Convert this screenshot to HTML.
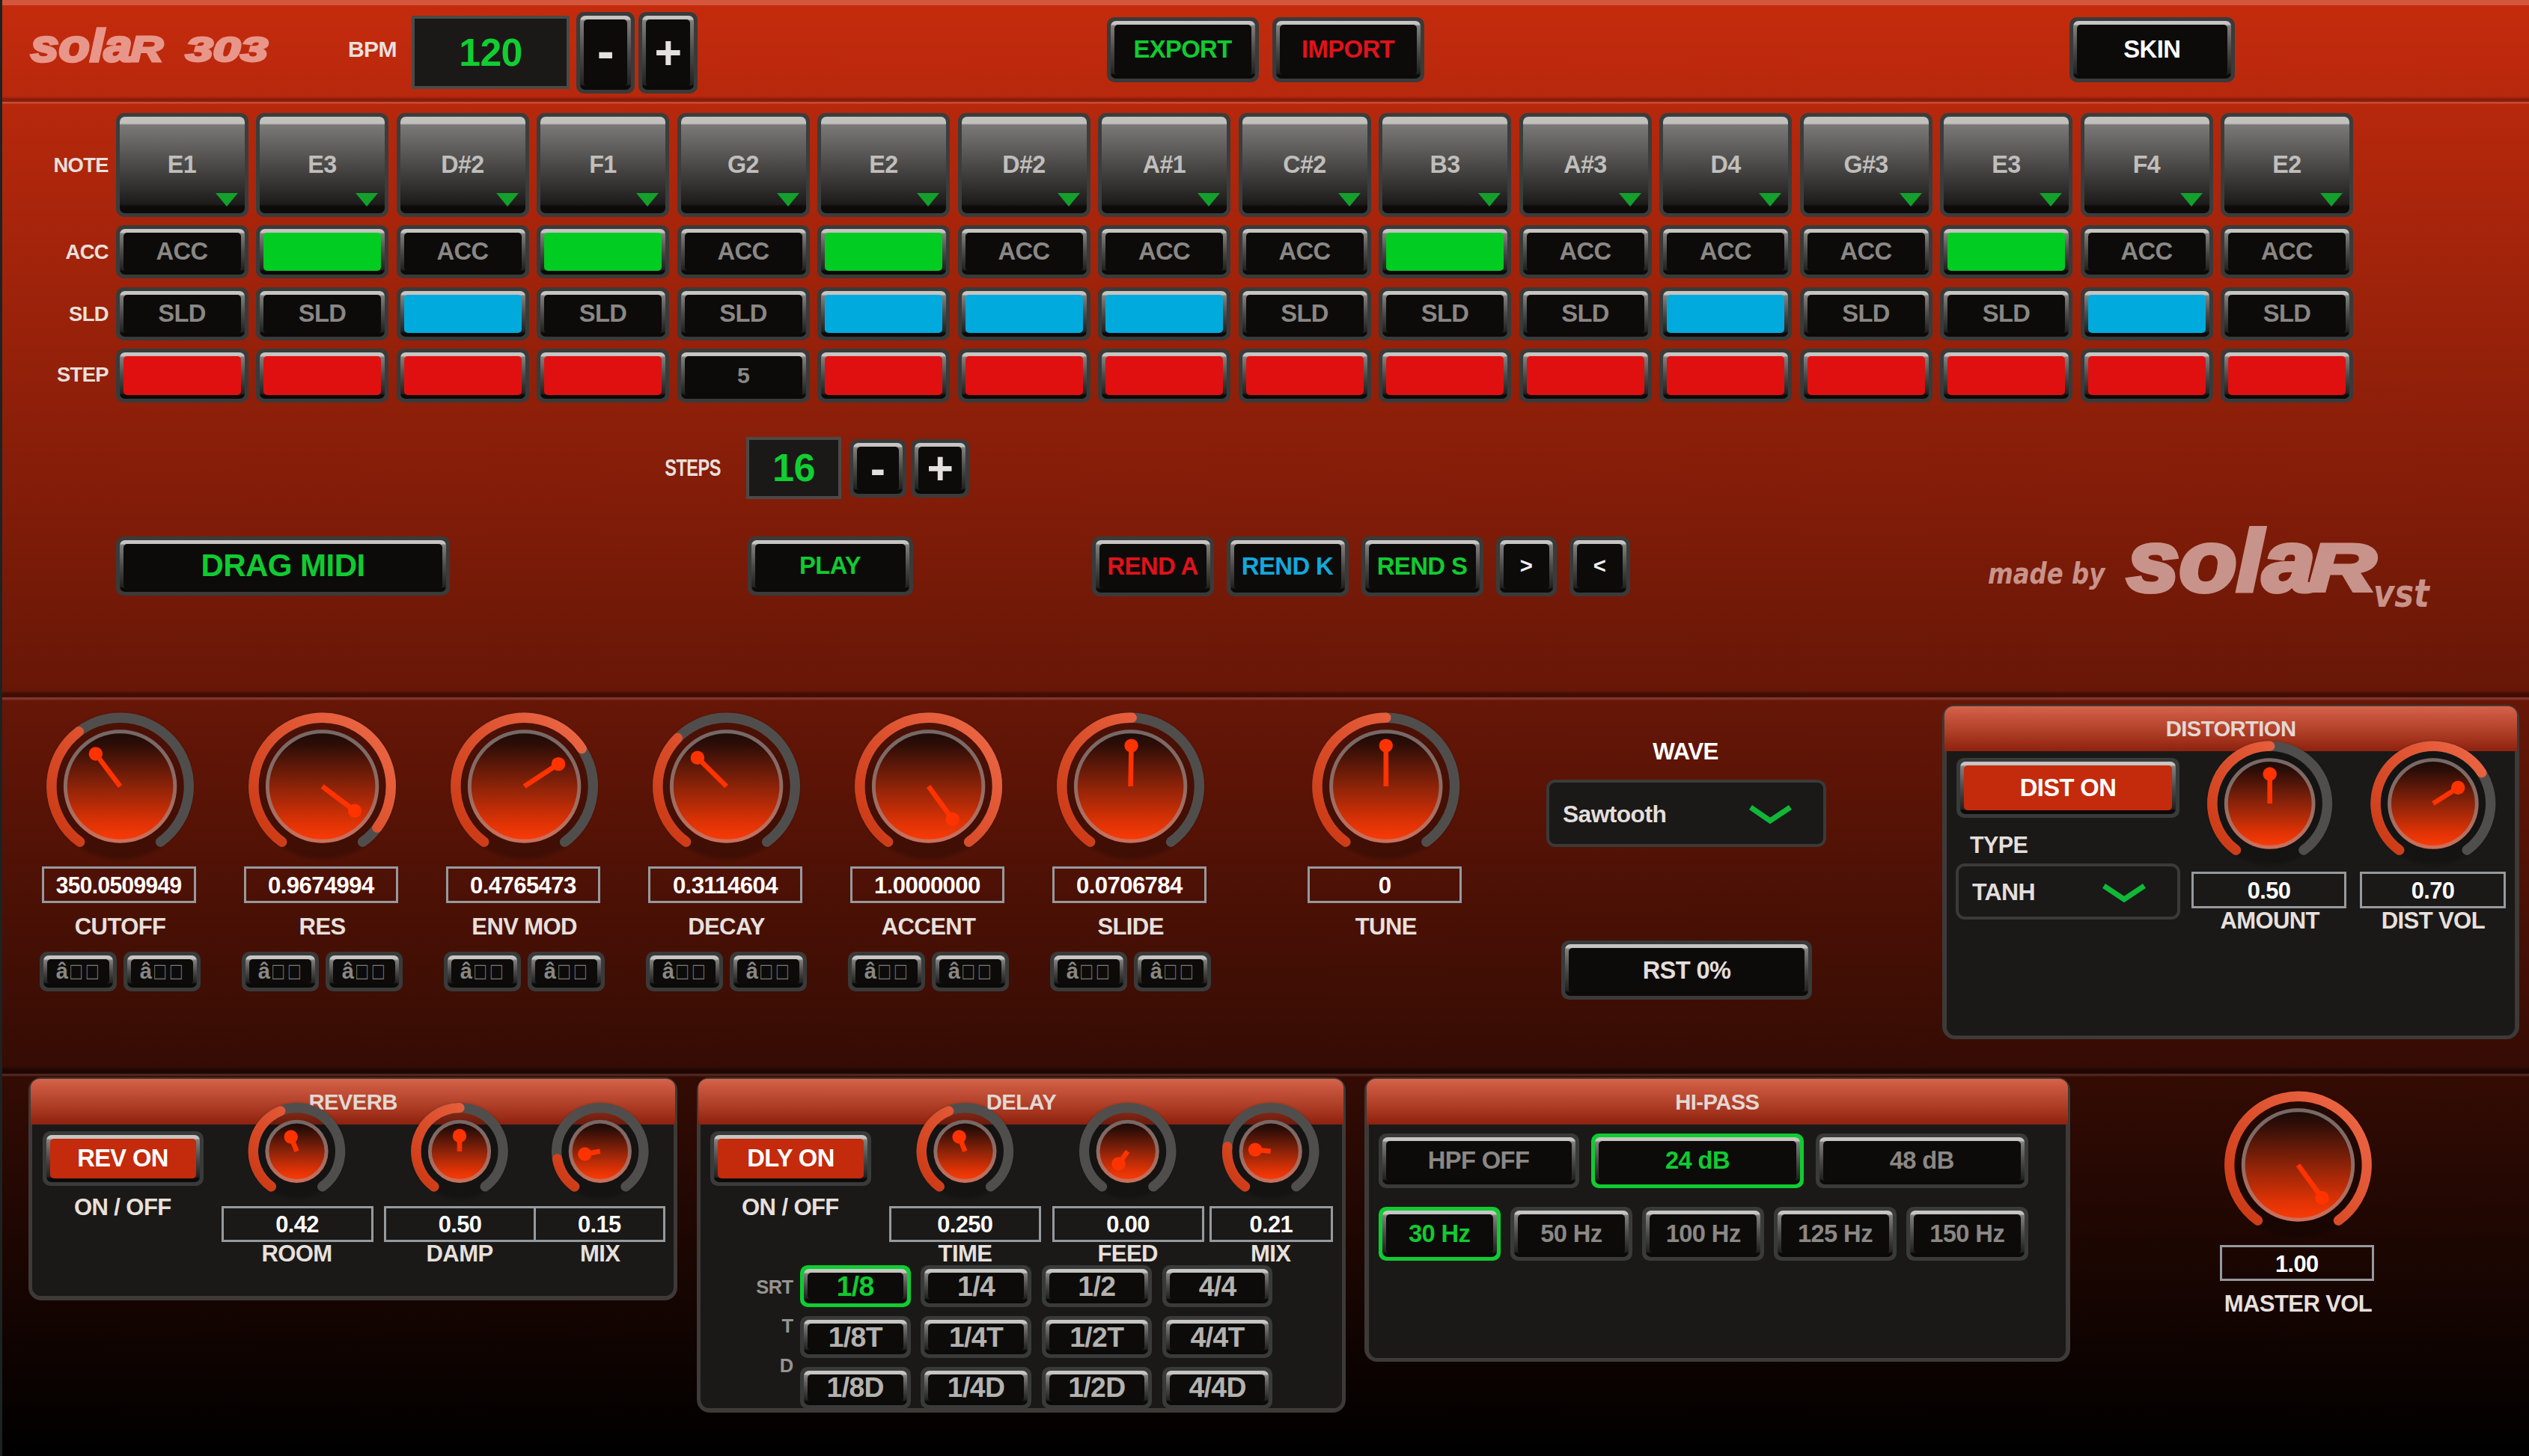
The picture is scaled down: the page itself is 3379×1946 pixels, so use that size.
<!DOCTYPE html><html><head><meta charset="utf-8"><title>solar 303</title><style>
*{margin:0;padding:0;box-sizing:border-box}
html,body{width:3379px;height:1946px;overflow:hidden;background:#000}
body{font-family:"Liberation Sans",sans-serif;font-weight:bold;position:relative;letter-spacing:-0.038em}
#bg{position:absolute;left:0;top:0;width:3379px;height:1946px;background:linear-gradient(to bottom,#c52b0d 0px,#000 1946px)}
#edge{position:absolute;left:0;top:0;width:3px;height:1946px;background:#1d2322}
#top{position:absolute;left:3px;top:0;width:3376px;height:7px;background:#d4563c}
.sepd{position:absolute;left:3px;width:3376px;height:6px}
.sepl{position:absolute;left:3px;width:3376px;height:3px}
.a{position:absolute}
.t{position:absolute;white-space:nowrap;text-align:center}
.b{position:absolute;background:#393b3a;border-radius:10px;padding:5px}
.b.sel{background:#10cc30}
.bv{width:100%;height:100%;border-radius:7px;padding:5px;background:linear-gradient(to bottom,#c9c8c5 0,#c4c3c0 4.6px,#807f7d 6.6px,#4b4a49 50%,#222221 calc(100% - 7px),#0b0a09 calc(100% - 5px),#0b0a09 100%)}
.f{width:100%;height:100%;border-radius:5px;display:flex;align-items:center;justify-content:center;background:#0c0b0a;color:#8a8784;font-size:32.7px;white-space:nowrap;padding-top:0px}
.n{position:absolute;background:#3b3d3c;border-radius:11px;padding:5px}
.ni{width:100%;height:100%;border-radius:7px;position:relative;background:linear-gradient(to bottom,#c2c1be 0,#c2c1be 9px,#7a7977 11px,#1c1b1a calc(100% - 12px),#0c0b0a calc(100% - 9px),#0c0b0a 100%);display:flex;align-items:center;justify-content:center;color:#c0bebb;font-size:32.3px}
.ni i{position:absolute;right:9px;bottom:9px;width:0;height:0;border-left:15px solid transparent;border-right:15px solid transparent;border-top:18px solid #13a02b}
.vb{position:absolute;border:3.5px solid #959a9e;color:#fff;font-size:29px;display:flex;align-items:center;justify-content:center;padding-top:2.5px}
.lcd{position:absolute;border:4px solid #4a4a48;background:#1a1918;color:#10cf30;display:flex;align-items:center;justify-content:center}
.p{position:absolute;background:#3d3a37;border-radius:17px;padding:5.6px}
.pi{width:100%;height:100%;border-radius:11.5px;background:#1a1918}
.ph{position:absolute;left:2.9px;top:2.6px;right:2.9px;border-radius:12px 12px 0 0;background:linear-gradient(to bottom,#d5644b 0,#c9553d 18%,#b4432b 50%,#a0301a 78%,#8c2210 100%)}
.dd{position:absolute;border:4px solid #3a3a39;border-radius:12px;background:#1a1918;color:#e4dedb;font-size:30px}
.tf{font-weight:normal;display:inline-block;transform:scale(0.86,1.1);transform-origin:left 62%;letter-spacing:7.5px;margin-left:3px;margin-right:-9px;color:#7c7a78}
svg{position:absolute;left:0;top:0;overflow:visible}
</style></head><body>
<div id="bg"></div><div id="edge"></div><div id="top"></div>
<div class="sepd" style="top:129.2px;height:6.9px;background:linear-gradient(to bottom,#891c0a00 0,#891c0a 3px,#891c0a 100%)"></div>
<div class="sepl" style="top:136.1px;height:3px;background:linear-gradient(to bottom,#c54a30 0,#c54a30 55%,#bd391e 100%)"></div>
<div class="sepd" style="top:923.2px;height:9px;background:linear-gradient(to bottom,#410e0400 0,#410e04 4px,#410e04 100%)"></div>
<div class="sepl" style="top:932.2px;height:4.3px;background:linear-gradient(to bottom,#81352a 0,#81352a 55%,#6e2012 100%)"></div>
<div class="sepd" style="top:1424.5px;height:10.3px;background:linear-gradient(to bottom,#1f060200 0,#1f0602 5.5px,#1f0602 100%)"></div>
<div class="sepl" style="top:1434.8px;height:4.3px;background:linear-gradient(to bottom,#4f251d 0,#4f251d 55%,#3c120b 100%)"></div>
<div class="t" style="left:97.5px;width:800px;text-align:center;top:49.12px;line-height:34.61px;font-size:30.1px;color:#e8e0dc">BPM</div>
<div class="lcd" style="left:550px;top:20.5px;width:211px;height:98.5px;font-size:51.73px">120</div>
<div class="b" style="left:770px;top:15.5px;width:78px;height:109.5px"><div class="bv"><div class="f" style="padding-bottom:3px;color:#e4e0dd;font-size:68.97px;">-</div></div></div>
<div class="b" style="left:853px;top:15.5px;width:79px;height:109.5px"><div class="bv"><div class="f" style="color:#e4e0dd;font-size:62.7px;">+</div></div></div>
<div class="b" style="left:1478.5px;top:22.5px;width:203px;height:87px"><div class="bv"><div class="f" style="color:#10cb30;font-size:32.81px;">EXPORT</div></div></div>
<div class="b" style="left:1699.5px;top:22.5px;width:203px;height:87px"><div class="bv"><div class="f" style="color:#e0121a;font-size:32.81px;">IMPORT</div></div></div>
<div class="b" style="left:2764.5px;top:22.5px;width:221.5px;height:87px"><div class="bv"><div class="f" style="color:#ffffff;font-size:32.81px;">SKIN</div></div></div>
<div class="t" style="left:-655px;width:800px;text-align:right;top:205.19px;line-height:31.49px;font-size:27.38px;color:#e8e0dc">NOTE</div>
<div class="t" style="left:-655px;width:800px;text-align:right;top:321.19px;line-height:31.49px;font-size:27.38px;color:#e8e0dc">ACC</div>
<div class="t" style="left:-655px;width:800px;text-align:right;top:403.69px;line-height:31.49px;font-size:27.38px;color:#e8e0dc">SLD</div>
<div class="t" style="left:-655px;width:800px;text-align:right;top:485.49px;line-height:31.49px;font-size:27.38px;color:#e8e0dc">STEP</div>
<div class="n" style="left:154.5px;top:150.5px;width:177px;height:139.5px"><div class="ni">E1<i></i></div></div>
<div class="b" style="left:154.5px;top:300.5px;width:177px;height:71.5px"><div class="bv"><div class="f" style="">ACC</div></div></div>
<div class="b" style="left:154.5px;top:383.5px;width:177px;height:71px"><div class="bv"><div class="f" style="">SLD</div></div></div>
<div class="b" style="left:154.5px;top:466px;width:177px;height:71.5px"><div class="bv"><div class="f" style="background:#e01010;"></div></div></div>
<div class="n" style="left:342px;top:150.5px;width:177px;height:139.5px"><div class="ni">E3<i></i></div></div>
<div class="b" style="left:342px;top:300.5px;width:177px;height:71.5px"><div class="bv"><div class="f" style="background:#00cc22;"></div></div></div>
<div class="b" style="left:342px;top:383.5px;width:177px;height:71px"><div class="bv"><div class="f" style="">SLD</div></div></div>
<div class="b" style="left:342px;top:466px;width:177px;height:71.5px"><div class="bv"><div class="f" style="background:#e01010;"></div></div></div>
<div class="n" style="left:529.5px;top:150.5px;width:177px;height:139.5px"><div class="ni">D#2<i></i></div></div>
<div class="b" style="left:529.5px;top:300.5px;width:177px;height:71.5px"><div class="bv"><div class="f" style="">ACC</div></div></div>
<div class="b" style="left:529.5px;top:383.5px;width:177px;height:71px"><div class="bv"><div class="f" style="background:#00aadc;"></div></div></div>
<div class="b" style="left:529.5px;top:466px;width:177px;height:71.5px"><div class="bv"><div class="f" style="background:#e01010;"></div></div></div>
<div class="n" style="left:717px;top:150.5px;width:177px;height:139.5px"><div class="ni">F1<i></i></div></div>
<div class="b" style="left:717px;top:300.5px;width:177px;height:71.5px"><div class="bv"><div class="f" style="background:#00cc22;"></div></div></div>
<div class="b" style="left:717px;top:383.5px;width:177px;height:71px"><div class="bv"><div class="f" style="">SLD</div></div></div>
<div class="b" style="left:717px;top:466px;width:177px;height:71.5px"><div class="bv"><div class="f" style="background:#e01010;"></div></div></div>
<div class="n" style="left:904.5px;top:150.5px;width:177px;height:139.5px"><div class="ni">G2<i></i></div></div>
<div class="b" style="left:904.5px;top:300.5px;width:177px;height:71.5px"><div class="bv"><div class="f" style="">ACC</div></div></div>
<div class="b" style="left:904.5px;top:383.5px;width:177px;height:71px"><div class="bv"><div class="f" style="">SLD</div></div></div>
<div class="b" style="left:904.5px;top:466px;width:177px;height:71.5px"><div class="bv"><div class="f" style="font-size:30.3px;">5</div></div></div>
<div class="n" style="left:1092px;top:150.5px;width:177px;height:139.5px"><div class="ni">E2<i></i></div></div>
<div class="b" style="left:1092px;top:300.5px;width:177px;height:71.5px"><div class="bv"><div class="f" style="background:#00cc22;"></div></div></div>
<div class="b" style="left:1092px;top:383.5px;width:177px;height:71px"><div class="bv"><div class="f" style="background:#00aadc;"></div></div></div>
<div class="b" style="left:1092px;top:466px;width:177px;height:71.5px"><div class="bv"><div class="f" style="background:#e01010;"></div></div></div>
<div class="n" style="left:1279.5px;top:150.5px;width:177px;height:139.5px"><div class="ni">D#2<i></i></div></div>
<div class="b" style="left:1279.5px;top:300.5px;width:177px;height:71.5px"><div class="bv"><div class="f" style="">ACC</div></div></div>
<div class="b" style="left:1279.5px;top:383.5px;width:177px;height:71px"><div class="bv"><div class="f" style="background:#00aadc;"></div></div></div>
<div class="b" style="left:1279.5px;top:466px;width:177px;height:71.5px"><div class="bv"><div class="f" style="background:#e01010;"></div></div></div>
<div class="n" style="left:1467px;top:150.5px;width:177px;height:139.5px"><div class="ni">A#1<i></i></div></div>
<div class="b" style="left:1467px;top:300.5px;width:177px;height:71.5px"><div class="bv"><div class="f" style="">ACC</div></div></div>
<div class="b" style="left:1467px;top:383.5px;width:177px;height:71px"><div class="bv"><div class="f" style="background:#00aadc;"></div></div></div>
<div class="b" style="left:1467px;top:466px;width:177px;height:71.5px"><div class="bv"><div class="f" style="background:#e01010;"></div></div></div>
<div class="n" style="left:1654.5px;top:150.5px;width:177px;height:139.5px"><div class="ni">C#2<i></i></div></div>
<div class="b" style="left:1654.5px;top:300.5px;width:177px;height:71.5px"><div class="bv"><div class="f" style="">ACC</div></div></div>
<div class="b" style="left:1654.5px;top:383.5px;width:177px;height:71px"><div class="bv"><div class="f" style="">SLD</div></div></div>
<div class="b" style="left:1654.5px;top:466px;width:177px;height:71.5px"><div class="bv"><div class="f" style="background:#e01010;"></div></div></div>
<div class="n" style="left:1842px;top:150.5px;width:177px;height:139.5px"><div class="ni">B3<i></i></div></div>
<div class="b" style="left:1842px;top:300.5px;width:177px;height:71.5px"><div class="bv"><div class="f" style="background:#00cc22;"></div></div></div>
<div class="b" style="left:1842px;top:383.5px;width:177px;height:71px"><div class="bv"><div class="f" style="">SLD</div></div></div>
<div class="b" style="left:1842px;top:466px;width:177px;height:71.5px"><div class="bv"><div class="f" style="background:#e01010;"></div></div></div>
<div class="n" style="left:2029.5px;top:150.5px;width:177px;height:139.5px"><div class="ni">A#3<i></i></div></div>
<div class="b" style="left:2029.5px;top:300.5px;width:177px;height:71.5px"><div class="bv"><div class="f" style="">ACC</div></div></div>
<div class="b" style="left:2029.5px;top:383.5px;width:177px;height:71px"><div class="bv"><div class="f" style="">SLD</div></div></div>
<div class="b" style="left:2029.5px;top:466px;width:177px;height:71.5px"><div class="bv"><div class="f" style="background:#e01010;"></div></div></div>
<div class="n" style="left:2217px;top:150.5px;width:177px;height:139.5px"><div class="ni">D4<i></i></div></div>
<div class="b" style="left:2217px;top:300.5px;width:177px;height:71.5px"><div class="bv"><div class="f" style="">ACC</div></div></div>
<div class="b" style="left:2217px;top:383.5px;width:177px;height:71px"><div class="bv"><div class="f" style="background:#00aadc;"></div></div></div>
<div class="b" style="left:2217px;top:466px;width:177px;height:71.5px"><div class="bv"><div class="f" style="background:#e01010;"></div></div></div>
<div class="n" style="left:2404.5px;top:150.5px;width:177px;height:139.5px"><div class="ni">G#3<i></i></div></div>
<div class="b" style="left:2404.5px;top:300.5px;width:177px;height:71.5px"><div class="bv"><div class="f" style="">ACC</div></div></div>
<div class="b" style="left:2404.5px;top:383.5px;width:177px;height:71px"><div class="bv"><div class="f" style="">SLD</div></div></div>
<div class="b" style="left:2404.5px;top:466px;width:177px;height:71.5px"><div class="bv"><div class="f" style="background:#e01010;"></div></div></div>
<div class="n" style="left:2592px;top:150.5px;width:177px;height:139.5px"><div class="ni">E3<i></i></div></div>
<div class="b" style="left:2592px;top:300.5px;width:177px;height:71.5px"><div class="bv"><div class="f" style="background:#00cc22;"></div></div></div>
<div class="b" style="left:2592px;top:383.5px;width:177px;height:71px"><div class="bv"><div class="f" style="">SLD</div></div></div>
<div class="b" style="left:2592px;top:466px;width:177px;height:71.5px"><div class="bv"><div class="f" style="background:#e01010;"></div></div></div>
<div class="n" style="left:2779.5px;top:150.5px;width:177px;height:139.5px"><div class="ni">F4<i></i></div></div>
<div class="b" style="left:2779.5px;top:300.5px;width:177px;height:71.5px"><div class="bv"><div class="f" style="">ACC</div></div></div>
<div class="b" style="left:2779.5px;top:383.5px;width:177px;height:71px"><div class="bv"><div class="f" style="background:#00aadc;"></div></div></div>
<div class="b" style="left:2779.5px;top:466px;width:177px;height:71.5px"><div class="bv"><div class="f" style="background:#e01010;"></div></div></div>
<div class="n" style="left:2967px;top:150.5px;width:177px;height:139.5px"><div class="ni">E2<i></i></div></div>
<div class="b" style="left:2967px;top:300.5px;width:177px;height:71.5px"><div class="bv"><div class="f" style="">ACC</div></div></div>
<div class="b" style="left:2967px;top:383.5px;width:177px;height:71px"><div class="bv"><div class="f" style="">SLD</div></div></div>
<div class="b" style="left:2967px;top:466px;width:177px;height:71.5px"><div class="bv"><div class="f" style="background:#e01010;"></div></div></div>
<div class="t" style="left:162.5px;width:800px;text-align:right;top:607.9px;line-height:36.05px;font-size:31.35px;color:#e8e0dc;transform:scaleX(0.75);transform-origin:right center">STEPS</div>
<div class="lcd" style="left:997px;top:584px;width:127px;height:82.5px;font-size:52.25px">16</div>
<div class="b" style="left:1134.5px;top:587px;width:76px;height:77.5px"><div class="bv"><div class="f" style="color:#e4e0dd;font-size:60.61px;">-</div></div></div>
<div class="b" style="left:1217px;top:587px;width:78px;height:77.5px"><div class="bv"><div class="f" style="color:#e4e0dd;font-size:60.61px;">+</div></div></div>
<div class="b" style="left:155px;top:717px;width:446px;height:78.5px"><div class="bv"><div class="f" style="color:#10cb30;font-size:42.11px;">DRAG MIDI</div></div></div>
<div class="b" style="left:998.5px;top:717px;width:221px;height:78.5px"><div class="bv"><div class="f" style="color:#10cb30;font-size:32.71px;">PLAY</div></div></div>
<div class="b" style="left:1458.5px;top:716.5px;width:163px;height:80px"><div class="bv"><div class="f" style="color:#e0121a;font-size:32.92px;">REND A</div></div></div>
<div class="b" style="left:1638.5px;top:716.5px;width:163px;height:80px"><div class="bv"><div class="f" style="color:#12a8dc;font-size:32.92px;">REND K</div></div></div>
<div class="b" style="left:1818.5px;top:716.5px;width:163px;height:80px"><div class="bv"><div class="f" style="color:#10cb30;font-size:32.92px;">REND S</div></div></div>
<div class="b" style="left:1998.5px;top:716.5px;width:81px;height:80px"><div class="bv"><div class="f" style="color:#f0f0f0;font-size:29.26px;">&gt;</div></div></div>
<div class="b" style="left:2096.5px;top:716.5px;width:81px;height:80px"><div class="bv"><div class="f" style="color:#f0f0f0;font-size:29.26px;">&lt;</div></div></div>
<div class="t" style="left:2656px;top:742.63px;font-size:39.5px;line-height:47.4px;color:#c8938a;font-style:italic;font-weight:bold;font-family:'DejaVu Sans',sans-serif;text-align:left;letter-spacing:0;transform:scaleX(0.82);transform-origin:left center">made by</div>
<div class="t" style="left:2842px;top:680.85px;font-size:115px;line-height:138px;color:#c8938a;font-style:italic;font-weight:bold;font-family:'Liberation Sans',sans-serif;text-align:left;letter-spacing:0;transform:scaleX(1.09);transform-origin:left center;-webkit-text-stroke:6px #c8938a;letter-spacing:0px">sola<span style="position:absolute;left:222.02px;top:24.64px;font-size:89.5px;line-height:107.40px;transform:scaleX(1.2844);transform-origin:left center;-webkit-text-stroke:5px #c8938a">R</span></div>
<div class="t" style="left:3171px;top:763.35px;font-size:51px;line-height:61.2px;color:#c8938a;font-style:italic;font-weight:bold;font-family:'DejaVu Sans',sans-serif;text-align:left;letter-spacing:0;transform:scaleX(0.85);transform-origin:left center">vst</div>
<div class="t" style="left:41px;top:24.29px;font-size:61.5px;line-height:73.8px;color:#e8968a;font-style:italic;font-weight:bold;font-family:'Liberation Sans',sans-serif;text-align:left;letter-spacing:0;transform:scaleX(1.1);transform-origin:left center;-webkit-text-stroke:3.5px #e8968a;letter-spacing:0px">sola<span style="position:absolute;left:121.36px;top:12.98px;font-size:48px;line-height:57.60px;transform:scaleX(1.1545);transform-origin:left center;-webkit-text-stroke:3px #e8968a">R</span></div>
<div class="t" style="left:247.5px;top:39.16px;font-size:46px;line-height:55.2px;color:#e8968a;font-style:italic;font-weight:bold;font-family:'Liberation Sans',sans-serif;text-align:left;letter-spacing:0;transform:scaleX(1.43);transform-origin:left center;-webkit-text-stroke:3px #e8968a">303</div>
<div class="vb" style="left:55.6px;top:1157.7px;width:206.6px;height:49.2px;font-size:31.14px"><span style="display:inline-block;transform:scaleX(0.958)">350.0509949</span></div>
<div class="t" style="left:-239.4px;width:800px;text-align:center;top:1220.88px;line-height:35.69px;font-size:31.04px;color:#e8e0dc">CUTOFF</div>
<div class="b" style="left:53.1px;top:1272px;width:102.5px;height:53px"><div class="bv"><div class="f" style="padding-left:1px;color:#8a8784;font-size:29.26px;">â<span class="tf">□□</span></div></div></div>
<div class="b" style="left:165.1px;top:1272px;width:102.5px;height:53px"><div class="bv"><div class="f" style="padding-left:1px;color:#8a8784;font-size:29.26px;">â<span class="tf">□□</span></div></div></div>
<div class="vb" style="left:325.6px;top:1157.7px;width:206.6px;height:49.2px;font-size:31.14px">0.9674994</div>
<div class="t" style="left:30.6px;width:800px;text-align:center;top:1220.88px;line-height:35.69px;font-size:31.04px;color:#e8e0dc">RES</div>
<div class="b" style="left:323.1px;top:1272px;width:102.5px;height:53px"><div class="bv"><div class="f" style="padding-left:1px;color:#8a8784;font-size:29.26px;">â<span class="tf">□□</span></div></div></div>
<div class="b" style="left:435.1px;top:1272px;width:102.5px;height:53px"><div class="bv"><div class="f" style="padding-left:1px;color:#8a8784;font-size:29.26px;">â<span class="tf">□□</span></div></div></div>
<div class="vb" style="left:595.6px;top:1157.7px;width:206.6px;height:49.2px;font-size:31.14px">0.4765473</div>
<div class="t" style="left:300.6px;width:800px;text-align:center;top:1220.88px;line-height:35.69px;font-size:31.04px;color:#e8e0dc">ENV MOD</div>
<div class="b" style="left:593.1px;top:1272px;width:102.5px;height:53px"><div class="bv"><div class="f" style="padding-left:1px;color:#8a8784;font-size:29.26px;">â<span class="tf">□□</span></div></div></div>
<div class="b" style="left:705.1px;top:1272px;width:102.5px;height:53px"><div class="bv"><div class="f" style="padding-left:1px;color:#8a8784;font-size:29.26px;">â<span class="tf">□□</span></div></div></div>
<div class="vb" style="left:865.6px;top:1157.7px;width:206.6px;height:49.2px;font-size:31.14px">0.3114604</div>
<div class="t" style="left:570.6px;width:800px;text-align:center;top:1220.88px;line-height:35.69px;font-size:31.04px;color:#e8e0dc">DECAY</div>
<div class="b" style="left:863.1px;top:1272px;width:102.5px;height:53px"><div class="bv"><div class="f" style="padding-left:1px;color:#8a8784;font-size:29.26px;">â<span class="tf">□□</span></div></div></div>
<div class="b" style="left:975.1px;top:1272px;width:102.5px;height:53px"><div class="bv"><div class="f" style="padding-left:1px;color:#8a8784;font-size:29.26px;">â<span class="tf">□□</span></div></div></div>
<div class="vb" style="left:1135.6px;top:1157.7px;width:206.6px;height:49.2px;font-size:31.14px">1.0000000</div>
<div class="t" style="left:840.6px;width:800px;text-align:center;top:1220.88px;line-height:35.69px;font-size:31.04px;color:#e8e0dc">ACCENT</div>
<div class="b" style="left:1133.1px;top:1272px;width:102.5px;height:53px"><div class="bv"><div class="f" style="padding-left:1px;color:#8a8784;font-size:29.26px;">â<span class="tf">□□</span></div></div></div>
<div class="b" style="left:1245.1px;top:1272px;width:102.5px;height:53px"><div class="bv"><div class="f" style="padding-left:1px;color:#8a8784;font-size:29.26px;">â<span class="tf">□□</span></div></div></div>
<div class="vb" style="left:1405.6px;top:1157.7px;width:206.6px;height:49.2px;font-size:31.14px">0.0706784</div>
<div class="t" style="left:1110.6px;width:800px;text-align:center;top:1220.88px;line-height:35.69px;font-size:31.04px;color:#e8e0dc">SLIDE</div>
<div class="b" style="left:1403.1px;top:1272px;width:102.5px;height:53px"><div class="bv"><div class="f" style="padding-left:1px;color:#8a8784;font-size:29.26px;">â<span class="tf">□□</span></div></div></div>
<div class="b" style="left:1515.1px;top:1272px;width:102.5px;height:53px"><div class="bv"><div class="f" style="padding-left:1px;color:#8a8784;font-size:29.26px;">â<span class="tf">□□</span></div></div></div>
<div class="vb" style="left:1746.8px;top:1157.7px;width:206.6px;height:49.2px;font-size:31.14px">0</div>
<div class="t" style="left:1451.8px;width:800px;text-align:center;top:1220.88px;line-height:35.69px;font-size:31.04px;color:#e8e0dc">TUNE</div>
<div class="t" style="left:1852px;width:800px;text-align:center;top:987.4px;line-height:36.05px;font-size:31.35px;color:#ffffff">WAVE</div>
<div class="dd" style="left:2066px;top:1042px;width:374px;height:90px"><div class="t" style="left:18px;top:24px;line-height:36px;font-size:31.8px;color:#e4dedb">Sawtooth</div></div>
<div class="b" style="left:2086px;top:1257px;width:335px;height:79px"><div class="bv"><div class="f" style="color:#e4dedb;font-size:32.6px;">RST 0%</div></div></div>
<div class="p" style="left:2595.3px;top:941.7px;width:770.7px;height:447.5px"><div class="pi"></div><div class="ph" style="height:59.5px"></div></div>
<div class="t" style="left:2580.65px;width:800px;text-align:center;top:958.15px;line-height:33.65px;font-size:29.26px;color:#e2d8d4">DISTORTION</div>
<div class="b" style="left:2614px;top:1013px;width:298px;height:80px"><div class="bv"><div class="f" style="background:#c42a0c;color:#ffffff;font-size:32.71px;">DIST ON</div></div></div>
<div class="t" style="left:2632px;text-align:left;top:1111.88px;line-height:35.09px;font-size:30.51px;color:#e4dedb">TYPE</div>
<div class="dd" style="left:2613px;top:1154px;width:300px;height:75px"><div class="t" style="left:18px;top:16px;line-height:36px;font-size:32px;color:#e4dedb">TANH</div></div>
<div class="vb" style="left:2928px;top:1165px;width:207px;height:49px;font-size:30.83px">0.50</div>
<div class="vb" style="left:3153px;top:1165px;width:195px;height:49px;font-size:30.83px">0.70</div>
<div class="t" style="left:2632.7px;width:800px;text-align:center;top:1212.58px;line-height:35.69px;font-size:31.04px;color:#e8e0dc">AMOUNT</div>
<div class="t" style="left:2850.9px;width:800px;text-align:center;top:1212.58px;line-height:35.69px;font-size:31.04px;color:#e8e0dc">DIST VOL</div>
<div class="p" style="left:37.7px;top:1439.8px;width:867.7px;height:298.2px"><div class="pi"></div><div class="ph" style="height:60.6px"></div></div>
<div class="t" style="left:71.55px;width:800px;text-align:center;top:1456.8px;line-height:33.65px;font-size:29.26px;color:#e2d8d4">REVERB</div>
<div class="b" style="left:56.5px;top:1511.5px;width:215px;height:73.5px"><div class="bv"><div class="f" style="background:#c42a0c;color:#ffffff;font-size:32.71px;">REV ON</div></div></div>
<div class="t" style="left:-236.2px;width:800px;text-align:center;top:1596.08px;line-height:35.69px;font-size:31.04px;color:#e8e0dc">ON / OFF</div>
<div class="vb" style="left:295.5px;top:1611.5px;width:203px;height:48.5px;font-size:30.83px">0.42</div>
<div class="vb" style="left:513px;top:1611.5px;width:203px;height:48.5px;font-size:30.83px">0.50</div>
<div class="vb" style="left:713px;top:1611.5px;width:175.5px;height:48.5px;font-size:30.83px">0.15</div>
<div class="t" style="left:-3.5px;width:800px;text-align:center;top:1658.08px;line-height:35.69px;font-size:31.04px;color:#e8e0dc">ROOM</div>
<div class="t" style="left:214px;width:800px;text-align:center;top:1658.08px;line-height:35.69px;font-size:31.04px;color:#e8e0dc">DAMP</div>
<div class="t" style="left:401.8px;width:800px;text-align:center;top:1658.08px;line-height:35.69px;font-size:31.04px;color:#e8e0dc">MIX</div>
<div class="p" style="left:930.6px;top:1439.8px;width:867.7px;height:448.2px"><div class="pi"></div><div class="ph" style="height:60.6px"></div></div>
<div class="t" style="left:964.45px;width:800px;text-align:center;top:1456.8px;line-height:33.65px;font-size:29.26px;color:#e2d8d4">DELAY</div>
<div class="b" style="left:949px;top:1511.5px;width:215px;height:73.5px"><div class="bv"><div class="f" style="background:#c42a0c;color:#ffffff;font-size:32.71px;">DLY ON</div></div></div>
<div class="t" style="left:655.9px;width:800px;text-align:center;top:1596.08px;line-height:35.69px;font-size:31.04px;color:#e8e0dc">ON / OFF</div>
<div class="vb" style="left:1187.5px;top:1611.5px;width:203.5px;height:48.5px;font-size:30.83px">0.250</div>
<div class="vb" style="left:1405.5px;top:1611.5px;width:203px;height:48.5px;font-size:30.83px">0.00</div>
<div class="vb" style="left:1615.5px;top:1611.5px;width:165.5px;height:48.5px;font-size:30.83px">0.21</div>
<div class="t" style="left:889.4px;width:800px;text-align:center;top:1657.58px;line-height:35.69px;font-size:31.04px;color:#e8e0dc">TIME</div>
<div class="t" style="left:1106.7px;width:800px;text-align:center;top:1657.58px;line-height:35.69px;font-size:31.04px;color:#e8e0dc">FEED</div>
<div class="t" style="left:1297.7px;width:800px;text-align:center;top:1657.58px;line-height:35.69px;font-size:31.04px;color:#e8e0dc">MIX</div>
<div class="t" style="left:259.5px;width:800px;text-align:right;top:1706.07px;line-height:29.32px;font-size:25.5px;color:#969492">SRT</div>
<div class="t" style="left:259.5px;width:800px;text-align:right;top:1758.07px;line-height:29.32px;font-size:25.5px;color:#969492">T</div>
<div class="t" style="left:259.5px;width:800px;text-align:right;top:1811.27px;line-height:29.32px;font-size:25.5px;color:#969492">D</div>
<div class="b sel" style="left:1069px;top:1691.2px;width:147.5px;height:56.3px"><div class="bv"><div class="f" style="color:#10cb30;font-size:37.31px;">1/8</div></div></div>
<div class="b" style="left:1230.3px;top:1691.2px;width:147.5px;height:56.3px"><div class="bv"><div class="f" style="color:#b4b2af;font-size:37.31px;">1/4</div></div></div>
<div class="b" style="left:1391.6px;top:1691.2px;width:147.5px;height:56.3px"><div class="bv"><div class="f" style="color:#b4b2af;font-size:37.31px;">1/2</div></div></div>
<div class="b" style="left:1552.9px;top:1691.2px;width:147.5px;height:56.3px"><div class="bv"><div class="f" style="color:#b4b2af;font-size:37.31px;">4/4</div></div></div>
<div class="b" style="left:1069px;top:1758.9px;width:147.5px;height:56.3px"><div class="bv"><div class="f" style="color:#b4b2af;font-size:37.31px;">1/8T</div></div></div>
<div class="b" style="left:1230.3px;top:1758.9px;width:147.5px;height:56.3px"><div class="bv"><div class="f" style="color:#b4b2af;font-size:37.31px;">1/4T</div></div></div>
<div class="b" style="left:1391.6px;top:1758.9px;width:147.5px;height:56.3px"><div class="bv"><div class="f" style="color:#b4b2af;font-size:37.31px;">1/2T</div></div></div>
<div class="b" style="left:1552.9px;top:1758.9px;width:147.5px;height:56.3px"><div class="bv"><div class="f" style="color:#b4b2af;font-size:37.31px;">4/4T</div></div></div>
<div class="b" style="left:1069px;top:1826.6px;width:147.5px;height:56.3px"><div class="bv"><div class="f" style="color:#b4b2af;font-size:37.31px;">1/8D</div></div></div>
<div class="b" style="left:1230.3px;top:1826.6px;width:147.5px;height:56.3px"><div class="bv"><div class="f" style="color:#b4b2af;font-size:37.31px;">1/4D</div></div></div>
<div class="b" style="left:1391.6px;top:1826.6px;width:147.5px;height:56.3px"><div class="bv"><div class="f" style="color:#b4b2af;font-size:37.31px;">1/2D</div></div></div>
<div class="b" style="left:1552.9px;top:1826.6px;width:147.5px;height:56.3px"><div class="bv"><div class="f" style="color:#b4b2af;font-size:37.31px;">4/4D</div></div></div>
<div class="p" style="left:1823px;top:1439.5px;width:942.7px;height:380.7px"><div class="pi"></div><div class="ph" style="height:60.7px"></div></div>
<div class="t" style="left:1894.35px;width:800px;text-align:center;top:1456.55px;line-height:33.65px;font-size:29.26px;color:#e2d8d4">HI-PASS</div>
<div class="b" style="left:1841.5px;top:1515.1px;width:268px;height:72.5px"><div class="bv"><div class="f" style="font-size:32.71px;">HPF OFF</div></div></div>
<div class="b sel" style="left:2126px;top:1515.1px;width:284px;height:72.5px"><div class="bv"><div class="f" style="color:#10cb30;font-size:32.71px;">24 dB</div></div></div>
<div class="b" style="left:2426px;top:1515.1px;width:283.5px;height:72.5px"><div class="bv"><div class="f" style="font-size:32.71px;">48 dB</div></div></div>
<div class="b sel" style="left:1841.5px;top:1612.7px;width:163.3px;height:72.8px"><div class="bv"><div class="f" style="color:#10cb30;font-size:32.71px;">30 Hz</div></div></div>
<div class="b" style="left:2017.75px;top:1612.7px;width:163.3px;height:72.8px"><div class="bv"><div class="f" style="font-size:32.71px;">50 Hz</div></div></div>
<div class="b" style="left:2194px;top:1612.7px;width:163.3px;height:72.8px"><div class="bv"><div class="f" style="font-size:32.71px;">100 Hz</div></div></div>
<div class="b" style="left:2370.25px;top:1612.7px;width:163.3px;height:72.8px"><div class="bv"><div class="f" style="font-size:32.71px;">125 Hz</div></div></div>
<div class="b" style="left:2546.5px;top:1612.7px;width:163.3px;height:72.8px"><div class="bv"><div class="f" style="font-size:32.71px;">150 Hz</div></div></div>
<div class="vb" style="left:2965.5px;top:1664.3px;width:206.5px;height:48px;font-size:30.83px">1.00</div>
<div class="t" style="left:2670.5px;width:800px;text-align:center;top:1724.58px;line-height:35.69px;font-size:31.04px;color:#e8e0dc">MASTER VOL</div>
<svg width="3379" height="1946" viewBox="0 0 3379 1946"><defs><radialGradient id="gd1" gradientUnits="userSpaceOnUse" cx="160.6" cy="1051" r="101.4"><stop offset="0" stop-color="#000" stop-opacity="0.23"/><stop offset="0.92" stop-color="#000" stop-opacity="0.23"/><stop offset="1" stop-color="#000" stop-opacity="0"/></radialGradient><linearGradient id="ga1" gradientUnits="userSpaceOnUse" x1="62.2" y1="1149.4" x2="259" y2="952.6"><stop offset="0" stop-color="#c8330d"/><stop offset="1" stop-color="#f06c4b"/></linearGradient><linearGradient id="gr1" gradientUnits="userSpaceOnUse" x1="0" y1="975.3" x2="0" y2="1126.7"><stop offset="0" stop-color="#746866"/><stop offset="0.5" stop-color="#8f6c65"/><stop offset="1" stop-color="#cc705b"/></linearGradient><linearGradient id="gf1" gradientUnits="userSpaceOnUse" x1="0" y1="980.2" x2="0" y2="1121.8"><stop offset="0" stop-color="#1e0b07"/><stop offset="0.1" stop-color="#2c0d07"/><stop offset="0.5" stop-color="#8c2309"/><stop offset="0.85" stop-color="#e03305"/><stop offset="1" stop-color="#f83a07"/></linearGradient></defs><circle cx="160.6" cy="1051" r="101.4" fill="url(#gd1)"/><path d="M106.67 1125.23A91.75 91.75 0 1 1 214.53 1125.23" fill="none" stroke="#504e4c" stroke-width="13.3" stroke-linecap="round"/><path d="M106.67 1125.23A91.75 91.75 0 0 1 105.38 977.73" fill="none" stroke="url(#ga1)" stroke-width="13.3" stroke-linecap="round"/><circle cx="160.6" cy="1051" r="75.7" fill="url(#gr1)"/><circle cx="160.6" cy="1051" r="70.8" fill="url(#gf1)"/><path d="M160.6 1051L127.86 1007.55" stroke="#ff3300" stroke-width="6.6" fill="none"/><circle cx="127.86" cy="1007.55" r="9.2" fill="#ff3300"/><defs><radialGradient id="gd2" gradientUnits="userSpaceOnUse" cx="430.6" cy="1051" r="101.4"><stop offset="0" stop-color="#000" stop-opacity="0.23"/><stop offset="0.92" stop-color="#000" stop-opacity="0.23"/><stop offset="1" stop-color="#000" stop-opacity="0"/></radialGradient><linearGradient id="ga2" gradientUnits="userSpaceOnUse" x1="332.2" y1="1149.4" x2="529" y2="952.6"><stop offset="0" stop-color="#c8330d"/><stop offset="1" stop-color="#f06c4b"/></linearGradient><linearGradient id="gr2" gradientUnits="userSpaceOnUse" x1="0" y1="975.3" x2="0" y2="1126.7"><stop offset="0" stop-color="#746866"/><stop offset="0.5" stop-color="#8f6c65"/><stop offset="1" stop-color="#cc705b"/></linearGradient><linearGradient id="gf2" gradientUnits="userSpaceOnUse" x1="0" y1="980.2" x2="0" y2="1121.8"><stop offset="0" stop-color="#1e0b07"/><stop offset="0.1" stop-color="#2c0d07"/><stop offset="0.5" stop-color="#8c2309"/><stop offset="0.85" stop-color="#e03305"/><stop offset="1" stop-color="#f83a07"/></linearGradient></defs><circle cx="430.6" cy="1051" r="101.4" fill="url(#gd2)"/><path d="M376.67 1125.23A91.75 91.75 0 1 1 484.53 1125.23" fill="none" stroke="#504e4c" stroke-width="13.3" stroke-linecap="round"/><path d="M376.67 1125.23A91.75 91.75 0 1 1 503.87 1106.22" fill="none" stroke="url(#ga2)" stroke-width="13.3" stroke-linecap="round"/><circle cx="430.6" cy="1051" r="75.7" fill="url(#gr2)"/><circle cx="430.6" cy="1051" r="70.8" fill="url(#gf2)"/><path d="M430.6 1051L474.05 1083.74" stroke="#ff3300" stroke-width="6.6" fill="none"/><circle cx="474.05" cy="1083.74" r="9.2" fill="#ff3300"/><defs><radialGradient id="gd3" gradientUnits="userSpaceOnUse" cx="700.6" cy="1051" r="101.4"><stop offset="0" stop-color="#000" stop-opacity="0.23"/><stop offset="0.92" stop-color="#000" stop-opacity="0.23"/><stop offset="1" stop-color="#000" stop-opacity="0"/></radialGradient><linearGradient id="ga3" gradientUnits="userSpaceOnUse" x1="602.2" y1="1149.4" x2="799" y2="952.6"><stop offset="0" stop-color="#c8330d"/><stop offset="1" stop-color="#f06c4b"/></linearGradient><linearGradient id="gr3" gradientUnits="userSpaceOnUse" x1="0" y1="975.3" x2="0" y2="1126.7"><stop offset="0" stop-color="#746866"/><stop offset="0.5" stop-color="#8f6c65"/><stop offset="1" stop-color="#cc705b"/></linearGradient><linearGradient id="gf3" gradientUnits="userSpaceOnUse" x1="0" y1="980.2" x2="0" y2="1121.8"><stop offset="0" stop-color="#1e0b07"/><stop offset="0.1" stop-color="#2c0d07"/><stop offset="0.5" stop-color="#8c2309"/><stop offset="0.85" stop-color="#e03305"/><stop offset="1" stop-color="#f83a07"/></linearGradient></defs><circle cx="700.6" cy="1051" r="101.4" fill="url(#gd3)"/><path d="M646.67 1125.23A91.75 91.75 0 1 1 754.53 1125.23" fill="none" stroke="#504e4c" stroke-width="13.3" stroke-linecap="round"/><path d="M646.67 1125.23A91.75 91.75 0 1 1 777.29 1000.63" fill="none" stroke="url(#ga3)" stroke-width="13.3" stroke-linecap="round"/><circle cx="700.6" cy="1051" r="75.7" fill="url(#gr3)"/><circle cx="700.6" cy="1051" r="70.8" fill="url(#gf3)"/><path d="M700.6 1051L746.07 1021.13" stroke="#ff3300" stroke-width="6.6" fill="none"/><circle cx="746.07" cy="1021.13" r="9.2" fill="#ff3300"/><defs><radialGradient id="gd4" gradientUnits="userSpaceOnUse" cx="970.6" cy="1051" r="101.4"><stop offset="0" stop-color="#000" stop-opacity="0.23"/><stop offset="0.92" stop-color="#000" stop-opacity="0.23"/><stop offset="1" stop-color="#000" stop-opacity="0"/></radialGradient><linearGradient id="ga4" gradientUnits="userSpaceOnUse" x1="872.2" y1="1149.4" x2="1069" y2="952.6"><stop offset="0" stop-color="#c8330d"/><stop offset="1" stop-color="#f06c4b"/></linearGradient><linearGradient id="gr4" gradientUnits="userSpaceOnUse" x1="0" y1="975.3" x2="0" y2="1126.7"><stop offset="0" stop-color="#746866"/><stop offset="0.5" stop-color="#8f6c65"/><stop offset="1" stop-color="#cc705b"/></linearGradient><linearGradient id="gf4" gradientUnits="userSpaceOnUse" x1="0" y1="980.2" x2="0" y2="1121.8"><stop offset="0" stop-color="#1e0b07"/><stop offset="0.1" stop-color="#2c0d07"/><stop offset="0.5" stop-color="#8c2309"/><stop offset="0.85" stop-color="#e03305"/><stop offset="1" stop-color="#f83a07"/></linearGradient></defs><circle cx="970.6" cy="1051" r="101.4" fill="url(#gd4)"/><path d="M916.67 1125.23A91.75 91.75 0 1 1 1024.53 1125.23" fill="none" stroke="#504e4c" stroke-width="13.3" stroke-linecap="round"/><path d="M916.67 1125.23A91.75 91.75 0 0 1 905.38 986.46" fill="none" stroke="url(#ga4)" stroke-width="13.3" stroke-linecap="round"/><circle cx="970.6" cy="1051" r="75.7" fill="url(#gr4)"/><circle cx="970.6" cy="1051" r="70.8" fill="url(#gf4)"/><path d="M970.6 1051L931.93 1012.74" stroke="#ff3300" stroke-width="6.6" fill="none"/><circle cx="931.93" cy="1012.74" r="9.2" fill="#ff3300"/><defs><radialGradient id="gd5" gradientUnits="userSpaceOnUse" cx="1240.6" cy="1051" r="101.4"><stop offset="0" stop-color="#000" stop-opacity="0.23"/><stop offset="0.92" stop-color="#000" stop-opacity="0.23"/><stop offset="1" stop-color="#000" stop-opacity="0"/></radialGradient><linearGradient id="ga5" gradientUnits="userSpaceOnUse" x1="1142.2" y1="1149.4" x2="1339" y2="952.6"><stop offset="0" stop-color="#c8330d"/><stop offset="1" stop-color="#f06c4b"/></linearGradient><linearGradient id="gr5" gradientUnits="userSpaceOnUse" x1="0" y1="975.3" x2="0" y2="1126.7"><stop offset="0" stop-color="#746866"/><stop offset="0.5" stop-color="#8f6c65"/><stop offset="1" stop-color="#cc705b"/></linearGradient><linearGradient id="gf5" gradientUnits="userSpaceOnUse" x1="0" y1="980.2" x2="0" y2="1121.8"><stop offset="0" stop-color="#1e0b07"/><stop offset="0.1" stop-color="#2c0d07"/><stop offset="0.5" stop-color="#8c2309"/><stop offset="0.85" stop-color="#e03305"/><stop offset="1" stop-color="#f83a07"/></linearGradient></defs><circle cx="1240.6" cy="1051" r="101.4" fill="url(#gd5)"/><path d="M1186.67 1125.23A91.75 91.75 0 1 1 1294.53 1125.23" fill="none" stroke="#504e4c" stroke-width="13.3" stroke-linecap="round"/><path d="M1186.67 1125.23A91.75 91.75 0 1 1 1294.53 1125.23" fill="none" stroke="url(#ga5)" stroke-width="13.3" stroke-linecap="round"/><circle cx="1240.6" cy="1051" r="75.7" fill="url(#gr5)"/><circle cx="1240.6" cy="1051" r="70.8" fill="url(#gf5)"/><path d="M1240.6 1051L1272.58 1095.01" stroke="#ff3300" stroke-width="6.6" fill="none"/><circle cx="1272.58" cy="1095.01" r="9.2" fill="#ff3300"/><defs><radialGradient id="gd6" gradientUnits="userSpaceOnUse" cx="1510.6" cy="1051" r="101.4"><stop offset="0" stop-color="#000" stop-opacity="0.23"/><stop offset="0.92" stop-color="#000" stop-opacity="0.23"/><stop offset="1" stop-color="#000" stop-opacity="0"/></radialGradient><linearGradient id="ga6" gradientUnits="userSpaceOnUse" x1="1412.2" y1="1149.4" x2="1609" y2="952.6"><stop offset="0" stop-color="#c8330d"/><stop offset="1" stop-color="#f06c4b"/></linearGradient><linearGradient id="gr6" gradientUnits="userSpaceOnUse" x1="0" y1="975.3" x2="0" y2="1126.7"><stop offset="0" stop-color="#746866"/><stop offset="0.5" stop-color="#8f6c65"/><stop offset="1" stop-color="#cc705b"/></linearGradient><linearGradient id="gf6" gradientUnits="userSpaceOnUse" x1="0" y1="980.2" x2="0" y2="1121.8"><stop offset="0" stop-color="#1e0b07"/><stop offset="0.1" stop-color="#2c0d07"/><stop offset="0.5" stop-color="#8c2309"/><stop offset="0.85" stop-color="#e03305"/><stop offset="1" stop-color="#f83a07"/></linearGradient></defs><circle cx="1510.6" cy="1051" r="101.4" fill="url(#gd6)"/><path d="M1456.67 1125.23A91.75 91.75 0 1 1 1564.53 1125.23" fill="none" stroke="#504e4c" stroke-width="13.3" stroke-linecap="round"/><path d="M1456.67 1125.23A91.75 91.75 0 0 1 1512.2 959.26" fill="none" stroke="url(#ga6)" stroke-width="13.3" stroke-linecap="round"/><circle cx="1510.6" cy="1051" r="75.7" fill="url(#gr6)"/><circle cx="1510.6" cy="1051" r="70.8" fill="url(#gf6)"/><path d="M1510.6 1051L1511.55 996.61" stroke="#ff3300" stroke-width="6.6" fill="none"/><circle cx="1511.55" cy="996.61" r="9.2" fill="#ff3300"/><defs><radialGradient id="gd7" gradientUnits="userSpaceOnUse" cx="1851.8" cy="1051" r="101.4"><stop offset="0" stop-color="#000" stop-opacity="0.23"/><stop offset="0.92" stop-color="#000" stop-opacity="0.23"/><stop offset="1" stop-color="#000" stop-opacity="0"/></radialGradient><linearGradient id="ga7" gradientUnits="userSpaceOnUse" x1="1753.4" y1="1149.4" x2="1950.2" y2="952.6"><stop offset="0" stop-color="#c8330d"/><stop offset="1" stop-color="#f06c4b"/></linearGradient><linearGradient id="gr7" gradientUnits="userSpaceOnUse" x1="0" y1="975.3" x2="0" y2="1126.7"><stop offset="0" stop-color="#746866"/><stop offset="0.5" stop-color="#8f6c65"/><stop offset="1" stop-color="#cc705b"/></linearGradient><linearGradient id="gf7" gradientUnits="userSpaceOnUse" x1="0" y1="980.2" x2="0" y2="1121.8"><stop offset="0" stop-color="#1e0b07"/><stop offset="0.1" stop-color="#2c0d07"/><stop offset="0.5" stop-color="#8c2309"/><stop offset="0.85" stop-color="#e03305"/><stop offset="1" stop-color="#f83a07"/></linearGradient></defs><circle cx="1851.8" cy="1051" r="101.4" fill="url(#gd7)"/><path d="M1797.87 1125.23A91.75 91.75 0 1 1 1905.73 1125.23" fill="none" stroke="#504e4c" stroke-width="13.3" stroke-linecap="round"/><path d="M1797.87 1125.23A91.75 91.75 0 0 1 1851.8 959.25" fill="none" stroke="url(#ga7)" stroke-width="13.3" stroke-linecap="round"/><circle cx="1851.8" cy="1051" r="75.7" fill="url(#gr7)"/><circle cx="1851.8" cy="1051" r="70.8" fill="url(#gf7)"/><path d="M1851.8 1051L1851.8 996.6" stroke="#ff3300" stroke-width="6.6" fill="none"/><circle cx="1851.8" cy="996.6" r="9.2" fill="#ff3300"/><path d="M2339 1079L2365 1097L2392 1079" fill="none" stroke="#10b838" stroke-width="7"/><path d="M2811 1184L2838 1202L2865 1184" fill="none" stroke="#10b838" stroke-width="7"/><defs><radialGradient id="gd8" gradientUnits="userSpaceOnUse" cx="3032.7" cy="1074" r="86.5"><stop offset="0" stop-color="#000" stop-opacity="0.23"/><stop offset="0.91" stop-color="#000" stop-opacity="0.23"/><stop offset="1" stop-color="#000" stop-opacity="0"/></radialGradient><linearGradient id="ga8" gradientUnits="userSpaceOnUse" x1="2949.2" y1="1157.5" x2="3116.2" y2="990.5"><stop offset="0" stop-color="#c8330d"/><stop offset="1" stop-color="#f06c4b"/></linearGradient><linearGradient id="gr8" gradientUnits="userSpaceOnUse" x1="0" y1="1013.2" x2="0" y2="1134.8"><stop offset="0" stop-color="#746866"/><stop offset="0.5" stop-color="#8f6c65"/><stop offset="1" stop-color="#cc705b"/></linearGradient><linearGradient id="gf8" gradientUnits="userSpaceOnUse" x1="0" y1="1018.1" x2="0" y2="1129.9"><stop offset="0" stop-color="#1e0b07"/><stop offset="0.1" stop-color="#2c0d07"/><stop offset="0.5" stop-color="#8c2309"/><stop offset="0.85" stop-color="#e03305"/><stop offset="1" stop-color="#f83a07"/></linearGradient></defs><circle cx="3032.7" cy="1074" r="86.5" fill="url(#gd8)"/><path d="M2987.53 1136.17A76.85 76.85 0 1 1 3077.87 1136.17" fill="none" stroke="#504e4c" stroke-width="13.3" stroke-linecap="round"/><path d="M2987.53 1136.17A76.85 76.85 0 0 1 3032.7 997.15" fill="none" stroke="url(#ga8)" stroke-width="13.3" stroke-linecap="round"/><circle cx="3032.7" cy="1074" r="60.8" fill="url(#gr8)"/><circle cx="3032.7" cy="1074" r="55.9" fill="url(#gf8)"/><path d="M3032.7 1074L3032.7 1034.5" stroke="#ff3300" stroke-width="6.6" fill="none"/><circle cx="3032.7" cy="1034.5" r="9.2" fill="#ff3300"/><defs><radialGradient id="gd9" gradientUnits="userSpaceOnUse" cx="3250.9" cy="1074" r="86.5"><stop offset="0" stop-color="#000" stop-opacity="0.23"/><stop offset="0.91" stop-color="#000" stop-opacity="0.23"/><stop offset="1" stop-color="#000" stop-opacity="0"/></radialGradient><linearGradient id="ga9" gradientUnits="userSpaceOnUse" x1="3167.4" y1="1157.5" x2="3334.4" y2="990.5"><stop offset="0" stop-color="#c8330d"/><stop offset="1" stop-color="#f06c4b"/></linearGradient><linearGradient id="gr9" gradientUnits="userSpaceOnUse" x1="0" y1="1013.2" x2="0" y2="1134.8"><stop offset="0" stop-color="#746866"/><stop offset="0.5" stop-color="#8f6c65"/><stop offset="1" stop-color="#cc705b"/></linearGradient><linearGradient id="gf9" gradientUnits="userSpaceOnUse" x1="0" y1="1018.1" x2="0" y2="1129.9"><stop offset="0" stop-color="#1e0b07"/><stop offset="0.1" stop-color="#2c0d07"/><stop offset="0.5" stop-color="#8c2309"/><stop offset="0.85" stop-color="#e03305"/><stop offset="1" stop-color="#f83a07"/></linearGradient></defs><circle cx="3250.9" cy="1074" r="86.5" fill="url(#gd9)"/><path d="M3205.73 1136.17A76.85 76.85 0 1 1 3296.07 1136.17" fill="none" stroke="#504e4c" stroke-width="13.3" stroke-linecap="round"/><path d="M3205.73 1136.17A76.85 76.85 0 1 1 3315.71 1032.71" fill="none" stroke="url(#ga9)" stroke-width="13.3" stroke-linecap="round"/><circle cx="3250.9" cy="1074" r="60.8" fill="url(#gr9)"/><circle cx="3250.9" cy="1074" r="55.9" fill="url(#gf9)"/><path d="M3250.9 1074L3284.21 1052.78" stroke="#ff3300" stroke-width="6.6" fill="none"/><circle cx="3284.21" cy="1052.78" r="9.2" fill="#ff3300"/><defs><radialGradient id="gd10" gradientUnits="userSpaceOnUse" cx="396.5" cy="1538.8" r="67.8"><stop offset="0" stop-color="#000" stop-opacity="0.23"/><stop offset="0.88" stop-color="#000" stop-opacity="0.23"/><stop offset="1" stop-color="#000" stop-opacity="0"/></radialGradient><linearGradient id="ga10" gradientUnits="userSpaceOnUse" x1="331.7" y1="1603.6" x2="461.3" y2="1474"><stop offset="0" stop-color="#c8330d"/><stop offset="1" stop-color="#f06c4b"/></linearGradient><linearGradient id="gr10" gradientUnits="userSpaceOnUse" x1="0" y1="1496.7" x2="0" y2="1580.9"><stop offset="0" stop-color="#746866"/><stop offset="0.5" stop-color="#8f6c65"/><stop offset="1" stop-color="#cc705b"/></linearGradient><linearGradient id="gf10" gradientUnits="userSpaceOnUse" x1="0" y1="1501.6" x2="0" y2="1576"><stop offset="0" stop-color="#1e0b07"/><stop offset="0.1" stop-color="#2c0d07"/><stop offset="0.5" stop-color="#8c2309"/><stop offset="0.85" stop-color="#e03305"/><stop offset="1" stop-color="#f83a07"/></linearGradient></defs><circle cx="396.5" cy="1538.8" r="67.8" fill="url(#gd10)"/><path d="M362.32 1585.84A58.15 58.15 0 1 1 430.68 1585.84" fill="none" stroke="#504e4c" stroke-width="13.3" stroke-linecap="round"/><path d="M362.32 1585.84A58.15 58.15 0 0 1 374.72 1484.88" fill="none" stroke="url(#ga10)" stroke-width="13.3" stroke-linecap="round"/><circle cx="396.5" cy="1538.8" r="42.1" fill="url(#gr10)"/><circle cx="396.5" cy="1538.8" r="37.2" fill="url(#gf10)"/><path d="M396.5 1538.8L388.71 1519.51" stroke="#ff3300" stroke-width="6.6" fill="none"/><circle cx="388.71" cy="1519.51" r="9.2" fill="#ff3300"/><defs><radialGradient id="gd11" gradientUnits="userSpaceOnUse" cx="614" cy="1538.8" r="67.8"><stop offset="0" stop-color="#000" stop-opacity="0.23"/><stop offset="0.88" stop-color="#000" stop-opacity="0.23"/><stop offset="1" stop-color="#000" stop-opacity="0"/></radialGradient><linearGradient id="ga11" gradientUnits="userSpaceOnUse" x1="549.2" y1="1603.6" x2="678.8" y2="1474"><stop offset="0" stop-color="#c8330d"/><stop offset="1" stop-color="#f06c4b"/></linearGradient><linearGradient id="gr11" gradientUnits="userSpaceOnUse" x1="0" y1="1496.7" x2="0" y2="1580.9"><stop offset="0" stop-color="#746866"/><stop offset="0.5" stop-color="#8f6c65"/><stop offset="1" stop-color="#cc705b"/></linearGradient><linearGradient id="gf11" gradientUnits="userSpaceOnUse" x1="0" y1="1501.6" x2="0" y2="1576"><stop offset="0" stop-color="#1e0b07"/><stop offset="0.1" stop-color="#2c0d07"/><stop offset="0.5" stop-color="#8c2309"/><stop offset="0.85" stop-color="#e03305"/><stop offset="1" stop-color="#f83a07"/></linearGradient></defs><circle cx="614" cy="1538.8" r="67.8" fill="url(#gd11)"/><path d="M579.82 1585.84A58.15 58.15 0 1 1 648.18 1585.84" fill="none" stroke="#504e4c" stroke-width="13.3" stroke-linecap="round"/><path d="M579.82 1585.84A58.15 58.15 0 0 1 614 1480.65" fill="none" stroke="url(#ga11)" stroke-width="13.3" stroke-linecap="round"/><circle cx="614" cy="1538.8" r="42.1" fill="url(#gr11)"/><circle cx="614" cy="1538.8" r="37.2" fill="url(#gf11)"/><path d="M614 1538.8L614 1518" stroke="#ff3300" stroke-width="6.6" fill="none"/><circle cx="614" cy="1518" r="9.2" fill="#ff3300"/><defs><radialGradient id="gd12" gradientUnits="userSpaceOnUse" cx="801.8" cy="1538.8" r="67.8"><stop offset="0" stop-color="#000" stop-opacity="0.23"/><stop offset="0.88" stop-color="#000" stop-opacity="0.23"/><stop offset="1" stop-color="#000" stop-opacity="0"/></radialGradient><linearGradient id="ga12" gradientUnits="userSpaceOnUse" x1="737" y1="1603.6" x2="866.6" y2="1474"><stop offset="0" stop-color="#c8330d"/><stop offset="1" stop-color="#f06c4b"/></linearGradient><linearGradient id="gr12" gradientUnits="userSpaceOnUse" x1="0" y1="1496.7" x2="0" y2="1580.9"><stop offset="0" stop-color="#746866"/><stop offset="0.5" stop-color="#8f6c65"/><stop offset="1" stop-color="#cc705b"/></linearGradient><linearGradient id="gf12" gradientUnits="userSpaceOnUse" x1="0" y1="1501.6" x2="0" y2="1576"><stop offset="0" stop-color="#1e0b07"/><stop offset="0.1" stop-color="#2c0d07"/><stop offset="0.5" stop-color="#8c2309"/><stop offset="0.85" stop-color="#e03305"/><stop offset="1" stop-color="#f83a07"/></linearGradient></defs><circle cx="801.8" cy="1538.8" r="67.8" fill="url(#gd12)"/><path d="M767.62 1585.84A58.15 58.15 0 1 1 835.98 1585.84" fill="none" stroke="#504e4c" stroke-width="13.3" stroke-linecap="round"/><path d="M767.62 1585.84A58.15 58.15 0 0 1 744.53 1548.9" fill="none" stroke="url(#ga12)" stroke-width="13.3" stroke-linecap="round"/><circle cx="801.8" cy="1538.8" r="42.1" fill="url(#gr12)"/><circle cx="801.8" cy="1538.8" r="37.2" fill="url(#gf12)"/><path d="M801.8 1538.8L781.32 1542.41" stroke="#ff3300" stroke-width="6.6" fill="none"/><circle cx="781.32" cy="1542.41" r="9.2" fill="#ff3300"/><defs><radialGradient id="gd13" gradientUnits="userSpaceOnUse" cx="1289.4" cy="1538.8" r="67.8"><stop offset="0" stop-color="#000" stop-opacity="0.23"/><stop offset="0.88" stop-color="#000" stop-opacity="0.23"/><stop offset="1" stop-color="#000" stop-opacity="0"/></radialGradient><linearGradient id="ga13" gradientUnits="userSpaceOnUse" x1="1224.6" y1="1603.6" x2="1354.2" y2="1474"><stop offset="0" stop-color="#c8330d"/><stop offset="1" stop-color="#f06c4b"/></linearGradient><linearGradient id="gr13" gradientUnits="userSpaceOnUse" x1="0" y1="1496.7" x2="0" y2="1580.9"><stop offset="0" stop-color="#746866"/><stop offset="0.5" stop-color="#8f6c65"/><stop offset="1" stop-color="#cc705b"/></linearGradient><linearGradient id="gf13" gradientUnits="userSpaceOnUse" x1="0" y1="1501.6" x2="0" y2="1576"><stop offset="0" stop-color="#1e0b07"/><stop offset="0.1" stop-color="#2c0d07"/><stop offset="0.5" stop-color="#8c2309"/><stop offset="0.85" stop-color="#e03305"/><stop offset="1" stop-color="#f83a07"/></linearGradient></defs><circle cx="1289.4" cy="1538.8" r="67.8" fill="url(#gd13)"/><path d="M1255.22 1585.84A58.15 58.15 0 1 1 1323.58 1585.84" fill="none" stroke="#504e4c" stroke-width="13.3" stroke-linecap="round"/><path d="M1255.22 1585.84A58.15 58.15 0 0 1 1267.62 1484.88" fill="none" stroke="url(#ga13)" stroke-width="13.3" stroke-linecap="round"/><circle cx="1289.4" cy="1538.8" r="42.1" fill="url(#gr13)"/><circle cx="1289.4" cy="1538.8" r="37.2" fill="url(#gf13)"/><path d="M1289.4 1538.8L1281.61 1519.51" stroke="#ff3300" stroke-width="6.6" fill="none"/><circle cx="1281.61" cy="1519.51" r="9.2" fill="#ff3300"/><defs><radialGradient id="gd14" gradientUnits="userSpaceOnUse" cx="1506.7" cy="1538.8" r="67.8"><stop offset="0" stop-color="#000" stop-opacity="0.23"/><stop offset="0.88" stop-color="#000" stop-opacity="0.23"/><stop offset="1" stop-color="#000" stop-opacity="0"/></radialGradient><linearGradient id="ga14" gradientUnits="userSpaceOnUse" x1="1441.9" y1="1603.6" x2="1571.5" y2="1474"><stop offset="0" stop-color="#c8330d"/><stop offset="1" stop-color="#f06c4b"/></linearGradient><linearGradient id="gr14" gradientUnits="userSpaceOnUse" x1="0" y1="1496.7" x2="0" y2="1580.9"><stop offset="0" stop-color="#746866"/><stop offset="0.5" stop-color="#8f6c65"/><stop offset="1" stop-color="#cc705b"/></linearGradient><linearGradient id="gf14" gradientUnits="userSpaceOnUse" x1="0" y1="1501.6" x2="0" y2="1576"><stop offset="0" stop-color="#1e0b07"/><stop offset="0.1" stop-color="#2c0d07"/><stop offset="0.5" stop-color="#8c2309"/><stop offset="0.85" stop-color="#e03305"/><stop offset="1" stop-color="#f83a07"/></linearGradient></defs><circle cx="1506.7" cy="1538.8" r="67.8" fill="url(#gd14)"/><path d="M1472.52 1585.84A58.15 58.15 0 1 1 1540.88 1585.84" fill="none" stroke="#504e4c" stroke-width="13.3" stroke-linecap="round"/><circle cx="1506.7" cy="1538.8" r="42.1" fill="url(#gr14)"/><circle cx="1506.7" cy="1538.8" r="37.2" fill="url(#gf14)"/><path d="M1506.7 1538.8L1494.47 1555.63" stroke="#ff3300" stroke-width="6.6" fill="none"/><circle cx="1494.47" cy="1555.63" r="9.2" fill="#ff3300"/><defs><radialGradient id="gd15" gradientUnits="userSpaceOnUse" cx="1697.7" cy="1538.8" r="67.8"><stop offset="0" stop-color="#000" stop-opacity="0.23"/><stop offset="0.88" stop-color="#000" stop-opacity="0.23"/><stop offset="1" stop-color="#000" stop-opacity="0"/></radialGradient><linearGradient id="ga15" gradientUnits="userSpaceOnUse" x1="1632.9" y1="1603.6" x2="1762.5" y2="1474"><stop offset="0" stop-color="#c8330d"/><stop offset="1" stop-color="#f06c4b"/></linearGradient><linearGradient id="gr15" gradientUnits="userSpaceOnUse" x1="0" y1="1496.7" x2="0" y2="1580.9"><stop offset="0" stop-color="#746866"/><stop offset="0.5" stop-color="#8f6c65"/><stop offset="1" stop-color="#cc705b"/></linearGradient><linearGradient id="gf15" gradientUnits="userSpaceOnUse" x1="0" y1="1501.6" x2="0" y2="1576"><stop offset="0" stop-color="#1e0b07"/><stop offset="0.1" stop-color="#2c0d07"/><stop offset="0.5" stop-color="#8c2309"/><stop offset="0.85" stop-color="#e03305"/><stop offset="1" stop-color="#f83a07"/></linearGradient></defs><circle cx="1697.7" cy="1538.8" r="67.8" fill="url(#gd15)"/><path d="M1663.52 1585.84A58.15 58.15 0 1 1 1731.88 1585.84" fill="none" stroke="#504e4c" stroke-width="13.3" stroke-linecap="round"/><path d="M1663.52 1585.84A58.15 58.15 0 0 1 1639.87 1532.72" fill="none" stroke="url(#ga15)" stroke-width="13.3" stroke-linecap="round"/><circle cx="1697.7" cy="1538.8" r="42.1" fill="url(#gr15)"/><circle cx="1697.7" cy="1538.8" r="37.2" fill="url(#gf15)"/><path d="M1697.7 1538.8L1677.01 1536.63" stroke="#ff3300" stroke-width="6.6" fill="none"/><circle cx="1677.01" cy="1536.63" r="9.2" fill="#ff3300"/><defs><radialGradient id="gd16" gradientUnits="userSpaceOnUse" cx="3070.5" cy="1557" r="101.4"><stop offset="0" stop-color="#000" stop-opacity="0.23"/><stop offset="0.92" stop-color="#000" stop-opacity="0.23"/><stop offset="1" stop-color="#000" stop-opacity="0"/></radialGradient><linearGradient id="ga16" gradientUnits="userSpaceOnUse" x1="2972.1" y1="1655.4" x2="3168.9" y2="1458.6"><stop offset="0" stop-color="#c8330d"/><stop offset="1" stop-color="#f06c4b"/></linearGradient><linearGradient id="gr16" gradientUnits="userSpaceOnUse" x1="0" y1="1481.3" x2="0" y2="1632.7"><stop offset="0" stop-color="#746866"/><stop offset="0.5" stop-color="#8f6c65"/><stop offset="1" stop-color="#cc705b"/></linearGradient><linearGradient id="gf16" gradientUnits="userSpaceOnUse" x1="0" y1="1486.2" x2="0" y2="1627.8"><stop offset="0" stop-color="#1e0b07"/><stop offset="0.1" stop-color="#2c0d07"/><stop offset="0.5" stop-color="#8c2309"/><stop offset="0.85" stop-color="#e03305"/><stop offset="1" stop-color="#f83a07"/></linearGradient></defs><circle cx="3070.5" cy="1557" r="101.4" fill="url(#gd16)"/><path d="M3016.57 1631.23A91.75 91.75 0 1 1 3124.43 1631.23" fill="none" stroke="url(#ga16)" stroke-width="13.3" stroke-linecap="round"/><circle cx="3070.5" cy="1557" r="75.7" fill="url(#gr16)"/><circle cx="3070.5" cy="1557" r="70.8" fill="url(#gf16)"/><path d="M3070.5 1557L3102.48 1601.01" stroke="#ff3300" stroke-width="6.6" fill="none"/><circle cx="3102.48" cy="1601.01" r="9.2" fill="#ff3300"/></svg>
</body></html>
